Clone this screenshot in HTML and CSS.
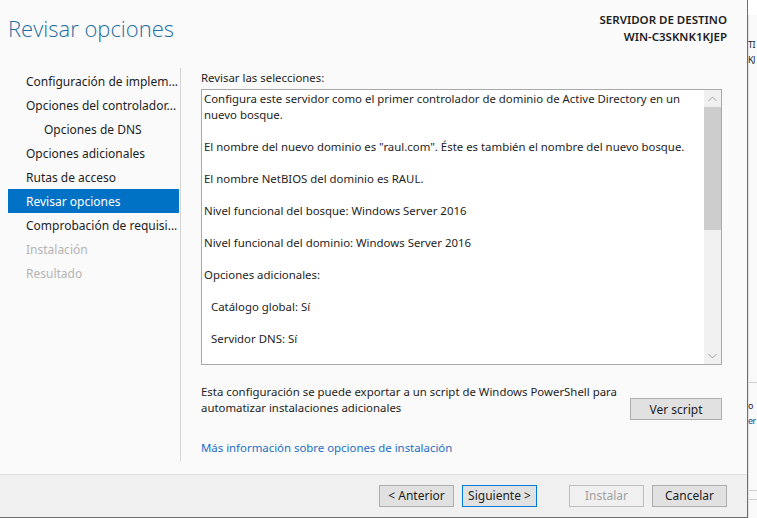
FILE: index.html
```html
<!DOCTYPE html>
<html lang="es">
<head>
<meta charset="utf-8">
<title>Revisar opciones</title>
<link rel="stylesheet" href="styles.css">
</head>
<body>
<div class="dialog">
  <div class="header">
    <h1 class="title">Revisar opciones</h1>
    <div class="server">
      <div>SERVIDOR DE DESTINO</div>
      <div>WIN-C3SKNK1KJEP</div>
    </div>
  </div>
  <div class="main">
    <nav class="sidebar">
      <div class="nav-item">Configuración de implem...</div>
      <div class="nav-item">Opciones del controlador...</div>
      <div class="nav-item sub">Opciones de DNS</div>
      <div class="nav-item">Opciones adicionales</div>
      <div class="nav-item">Rutas de acceso</div>
      <div class="nav-item active">Revisar opciones</div>
      <div class="nav-item">Comprobación de requisi...</div>
      <div class="nav-item disabled">Instalación</div>
      <div class="nav-item disabled">Resultado</div>
    </nav>
    <section class="content">
      <div class="label">Revisar las selecciones:</div>
      <div class="review">
        <div class="review-text">
          <p>Configura este servidor como el primer controlador de dominio de Active Directory en un nuevo bosque.</p>
          <p>El nombre del nuevo dominio es "raul.com". Éste es también el nombre del nuevo bosque.</p>
          <p>El nombre NetBIOS del dominio es RAUL.</p>
          <p>Nivel funcional del bosque: Windows Server 2016</p>
          <p>Nivel funcional del dominio: Windows Server 2016</p>
          <p>Opciones adicionales:</p>
          <p class="indent">Catálogo global: Sí</p>
          <p class="indent">Servidor DNS: Sí</p>
        </div>
        <div class="scrollbar">
          <div class="arrow">
            <svg width="9" height="6" viewBox="0 0 9 6"><polyline points="0.5,5 4.5,1 8.5,5" fill="none" stroke="#a0a0a0" stroke-width="1"/></svg>
          </div>
          <div class="track"><div class="thumb"></div></div>
          <div class="arrow">
            <svg width="9" height="6" viewBox="0 0 9 6"><polyline points="0.5,1 4.5,5 8.5,1" fill="none" stroke="#a0a0a0" stroke-width="1"/></svg>
          </div>
        </div>
      </div>
      <div class="export">
        <div class="export-text">Esta configuración se puede exportar a un script de Windows PowerShell para automatizar instalaciones adicionales</div>
        <button class="btn script-btn">Ver script</button>
      </div>
      <a class="link" href="#">Más información sobre opciones de instalación</a>
    </section>
  </div>
  <div class="footer">
    <button class="btn">&lt; Anterior</button>
    <button class="btn primary">Siguiente &gt;</button>
    <button class="btn disabled-btn">Instalar</button>
    <button class="btn">Cancelar</button>
  </div>
</div>
<div class="behind">
  <div class="behind-top"></div>
  <div class="behind-panel">
    <div class="frag f1">TI</div>
    <div class="frag f2">KJ</div>
    <div class="behind-sep"></div>
    <div class="frag f3">o</div>
    <div class="frag f4">er</div>
    <div class="behind-lines"></div>
  </div>
</div>
</body>
</html>
```

FILE: styles.css
```css
* { box-sizing: border-box; }
html, body { margin: 0; padding: 0; }
body {
  width: 757px;
  height: 518px;
  overflow: hidden;
  display: flex;
  background: #ffffff;
  font-family: "Noto Sans", "Open Sans", sans-serif;
  font-size: 12px;
  color: #1e1e1e;
}
.dialog {
  width: 748px;
  height: 518px;
  flex: none;
  display: flex;
  flex-direction: column;
  background: #fafafa;
  border-right: 1px solid #6e6e6e;
  border-bottom: 1px solid #6e6e6e;
}
.header {
  height: 68px;
  display: flex;
  justify-content: space-between;
  align-items: flex-start;
  flex: none;
}
.title {
  margin: 13px 0 0 8px;
  font-family: "Open Sans", "Noto Sans", sans-serif;
  font-weight: 300;
  font-size: 22px;
  line-height: 30px;
  color: #1c6ea4;
}
.server {
  margin: 11px 20px 0 0;
  text-align: right;
  font-weight: 600;
  font-size: 11.5px;
  line-height: 17px;
  color: #1e1e1e;
}
.main {
  flex: 1;
  display: flex;
  min-height: 0;
}
.sidebar {
  width: 173px;
  flex: none;
  margin-left: 8px;
  padding-top: 1px;
  height: 393px;
  border-right: 1px solid #d4d4d4;
  display: flex;
  flex-direction: column;
}
.nav-item {
  height: 24px;
  line-height: 25px;
  padding-left: 18px;
  margin-right: 1px;
  white-space: nowrap;
  font-size: 12px;
  color: #1e1e1e;
}
.nav-item.sub { padding-left: 36px; }
.nav-item.active { background: #0072c6; color: #ffffff; }
.nav-item.disabled { color: #b4b4b4; }
.content {
  flex: 1;
  padding: 2px 25px 0 20px;
  display: flex;
  flex-direction: column;
  font-size: 11.4px;
}
.label {
  line-height: 16px;
  height: 19px;
}
.review {
  height: 276px;
  border: 1px solid #a9a9a9;
  background: #ffffff;
  display: flex;
}
.review-text {
  flex: 1;
  padding: 1px 2px 0 2px;
  overflow: hidden;
  line-height: 16px;
}
.review-text p {
  margin: 0 0 16px 0;
}
.review-text p.indent { padding-left: 7px; }
.scrollbar {
  width: 17px;
  flex: none;
  background: #f0f0f0;
  display: flex;
  flex-direction: column;
}
.arrow {
  height: 17px;
  display: flex;
  align-items: center;
  justify-content: center;
  flex: none;
}
.track { flex: 1; }
.thumb {
  height: 123px;
  background: #cdcdcd;
}
.export {
  display: flex;
  justify-content: space-between;
  align-items: flex-end;
  margin-top: 19px;
}
.export-text {
  width: 425px;
  line-height: 16px;
}
.btn {
  width: 75px;
  height: 22px;
  padding: 0;
  font-family: "Noto Sans", "Open Sans", sans-serif;
  font-size: 12px;
  color: #1e1e1e;
  background: #e1e1e1;
  border: 1px solid #adadad;
  border-radius: 0;
}
.script-btn {
  width: 92px;
  margin-bottom: -4px;
}
.link {
  margin-top: 24px;
  color: #1a6fc4;
  text-decoration: none;
  line-height: 16px;
}
.footer {
  height: 43px;
  flex: none;
  background: #f0f0f0;
  border-top: 1px solid #dfdfdf;
  display: flex;
  align-items: center;
  padding-left: 379px;
  padding-bottom: 1px;
  gap: 8px;
}
.btn.primary { border-color: #0078d7; }
.btn.disabled-btn {
  margin-left: 24px;
  color: #a0a0a0;
  background: #f0f0f0;
  border-color: #bfbfbf;
}
.behind {
  flex: 1;
  height: 518px;
  overflow: hidden;
  background: #ffffff;
  display: flex;
  flex-direction: column;
}
.behind-top { height: 15px; flex: none; }
.behind-panel {
  flex: 1;
  background: #f9f9f9;
  border-left: 1px solid #e2e2e2;
  display: flex;
  flex-direction: column;
  font-size: 9px;
  line-height: 15px;
  white-space: nowrap;
}
.frag { margin-left: -1px; color: #1e1e1e; letter-spacing: -0.5px; }
.f1 { margin-top: 22px; }
.behind-sep { margin-top: 315px; height: 1px; background: #cfcfcf; }
.f3 { margin-top: 15px; }
.f4 { color: #1a4f8a; }
.behind-lines {
  margin-top: 62px;
  height: 10px;
  border-top: 1px solid #d0d0d0;
  border-bottom: 1px solid #d0d0d0;
}
```
